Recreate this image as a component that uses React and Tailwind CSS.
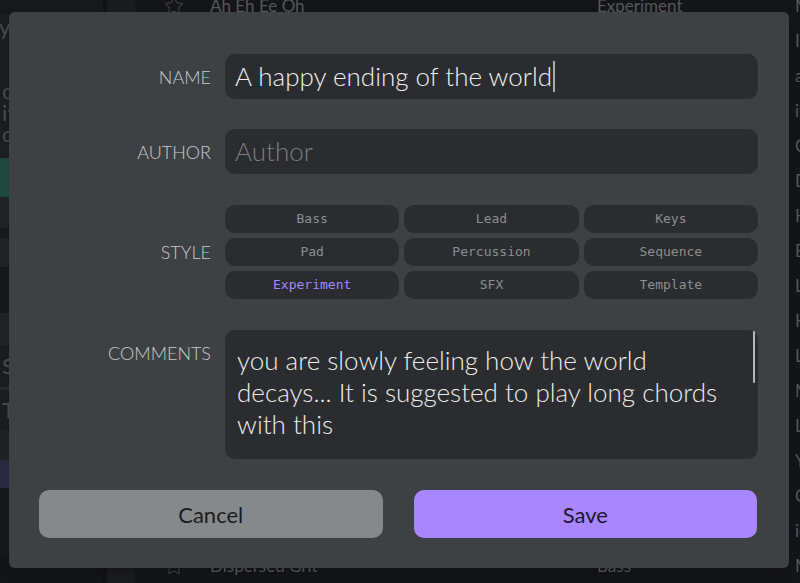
import { Star } from "lucide-react"

const STYLES = [
  "Bass", "Lead", "Keys",
  "Pad", "Percussion", "Sequence",
  "Experiment", "SFX", "Template",
]

const PRESETS = [
  ["Ah Eh Ee Oh", "Experiment", "Mouth shapes on a vowel filter"],
  ["Analog Drift", "Lead", "In tune, mostly"],
  ["Bell Tower", "Keys", "a bright bell with long tail"],
  ["Breathing Pad", "Pad", "it moves with the mod wheel"],
  ["Cathedral", "Pad", "Choir like wash"],
  ["Deep Sub", "Bass", "Deep sine bass"],
  ["Hollow Wind", "SFX", "Hear the wind howl"],
  ["Broken Radio", "Experiment", "Bits and static"],
  ["Liquid Lead", "Lead", "Long glide lead"],
  ["Heartbeat", "Percussion", "Heavy kick pattern"],
  ["Low Rumble", "Bass", "Low and slow"],
  ["Metal Keys", "Keys", "Mallets on steel"],
  ["Loop Machine", "Sequence", "Loops forever"],
  ["Yellow Sky", "Pad", "Yearning strings"],
  ["Cold Pluck", "Lead", "Crisp pluck"],
  ["Ice Shards", "SFX", "icy glitter"],
  ["Dispersed Grit", "Bass", "Mean distorted bass"],
]

const SIDEBAR = [
  { h: 14, bg: "bg-[#17181a]" },
  { h: 26, bg: "bg-[#1c1d20]", text: "Keys", shift: true },
  { h: 40, bg: "bg-[#1c1d20]" },
  { h: 22, bg: "bg-[#1c1d20]", text: "de" },
  { h: 21, bg: "bg-[#1c1d20]", text: "it" },
  { h: 21, bg: "bg-[#1c1d20]", text: "d" },
  { h: 14, bg: "bg-[#1e1f21]" },
  { h: 39, bg: "bg-[#1e4a3c]" },
  { h: 31, bg: "bg-[#222326]" },
  { h: 10, bg: "bg-[#18191b]" },
  { h: 29, bg: "bg-[#222326]" },
  { h: 46, bg: "bg-[#18191b]" },
  { h: 32, bg: "bg-[#222326]" },
  { h: 42, bg: "bg-[#1c1d20]", text: "Se" },
  { h: 3, bg: "bg-[#2a2b2d]" },
  { h: 40, bg: "bg-[#1c1d20]", text: "Te" },
  { h: 30, bg: "bg-[#202120]" },
  { h: 28, bg: "bg-[#2c2840]" },
  { h: 66, bg: "bg-[#17181a]" },
]

function Background() {
  return (
    <div className="flex h-[583px] w-[800px] overflow-hidden bg-[#141518] font-['Lato',sans-serif]">
      <div className="flex w-[103px] shrink-0 flex-col">
        {SIDEBAR.map((s, i) => (
          <div
            key={i}
            className={`flex items-center overflow-hidden text-[22px] leading-none text-[#4a4b4e] ${s.bg}`}
            style={{ height: s.h }}
          >
            <span className={s.shift ? "-ml-[26px]" : "pl-[2px]"}>{s.text}</span>
          </div>
        ))}
      </div>
      <div className="w-[4px] shrink-0 bg-[#101113]" />
      <div className="w-[28px] shrink-0 bg-[#1a1b1d]" />
      <div className="-mt-[12px] flex flex-1 flex-col">
        {PRESETS.map(([name, style, desc]) => (
          <div key={name} className="flex h-[35px] shrink-0 items-center text-[17px] text-[#55575a]">
            <div className="flex w-[75px] justify-center pl-[2px]">
              <Star size={20} strokeWidth={1.5} className="text-[#3c3d40]" />
            </div>
            <div className="w-[387px] truncate">{name}</div>
            <div className="w-[198px]">{style}</div>
            <div className="w-[200px] truncate">{desc}</div>
          </div>
        ))}
      </div>
    </div>
  )
}

function Field({ label, top, children, className = "" }) {
  return (
    <div className={`flex ${top ? "items-start" : "items-center"} ${className}`}>
      <div
        className={`w-[216px] shrink-0 pr-[14px] text-right text-[18px] font-light leading-6 uppercase text-[#c8cacc] ${top ? "pt-[11px]" : ""}`}
      >
        {label}
      </div>
      <div className="w-[533px]">{children}</div>
    </div>
  )
}

function EditPresetDialog() {
  return (
    <div className="absolute inset-0 pl-[9px] pt-[12px]">
      <div className="flex h-[556px] w-[780px] flex-col rounded-md bg-[#3e4144] pt-[42px] font-['Lato',sans-serif] shadow-lg">
        <Field label="Name">
          <div className="flex h-[45px] items-center rounded-[10px] bg-[#2a2c2f] pl-[10px] text-[26px] font-light text-[#f0f0f0]">
            A happy ending of the world
            <span className="ml-[1px] h-[31px] w-[2px] bg-[#a9abad]" />
          </div>
        </Field>

        <Field label="Author" className="mt-[30px]">
          <div className="flex h-[45px] items-center rounded-[10px] bg-[#2a2c2f] pl-[10px] text-[26px] font-light text-[#7c7e81]">
            Author
          </div>
        </Field>

        <Field label="Style" className="mt-[31px]">
          <div className="grid grid-cols-3 gap-[5px]">
            {STYLES.map((s) => (
              <button
                key={s}
                type="button"
                className={`h-[28px] rounded-[10px] bg-[#2a2c2f] font-['DejaVu_Sans_Mono',monospace] text-[13px] ${
                  s === "Experiment" ? "text-[#a888f7]" : "text-[#8c8e90]"
                }`}
              >
                {s}
              </button>
            ))}
          </div>
        </Field>

        <Field label="Comments" top className="mt-[31px]">
          <div className="relative h-[129px] rounded-[10px] bg-[#2a2c2f] px-[12px] pt-[14px] text-[26px] font-light leading-[32px] text-[#ececec]">
            you are slowly feeling how the world
            <br />
            decays... It is suggested to play long chords
            <br />
            with this
            <div className="absolute right-[3px] top-[1px] h-[52px] w-[2px] rounded-full bg-[#b4b6b8]" />
          </div>
        </Field>

        <div className="mt-[31px] flex gap-[31px] pl-[30px] pr-[32px]">
          <button
            type="button"
            className="h-[48px] flex-1 rounded-[10px] bg-[#86898c] text-[22px] text-[#1c1c1e]"
          >
            Cancel
          </button>
          <button
            type="button"
            className="h-[48px] flex-1 rounded-[10px] bg-[#a886fd] text-[22px] text-[#1b1630]"
          >
            Save
          </button>
        </div>
      </div>
    </div>
  )
}

export default function App() {
  return (
    <div className="relative h-[583px] w-[800px] overflow-hidden">
      <Background />
      <EditPresetDialog />
    </div>
  )
}
